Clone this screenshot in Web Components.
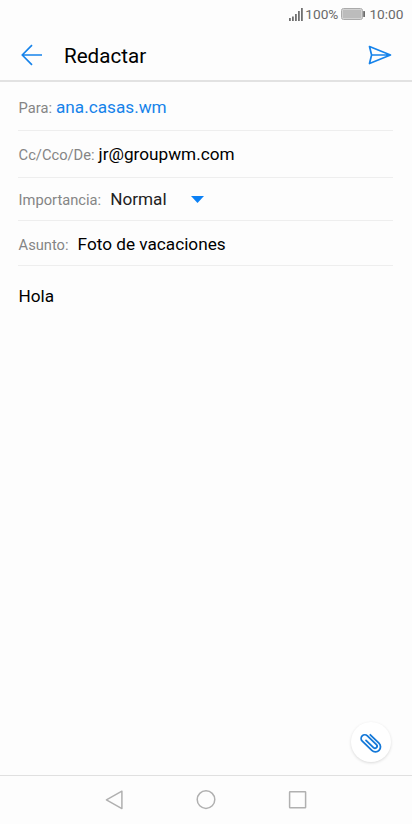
<!DOCTYPE html>
<html lang="es">
<head>
<meta charset="utf-8">
<title>Redactar</title>
<style>
html,body{margin:0;height:100%;background:#fdfdfd;overflow:hidden}
</style>
</head>
<body>
<mail-compose></mail-compose>
<script>
const define = (name, html) => {
  const t = document.createElement('template');
  t.innerHTML = html;
  customElements.define(name, class extends HTMLElement {
    constructor() {
      super();
      this.attachShadow({ mode: 'open' }).append(t.content.cloneNode(true));
    }
  });
};

define('status-bar', `
<style>
:host{display:flex;height:28px;box-sizing:border-box;padding-right:8.500px;justify-content:flex-end;align-items:center;font-size:13.7px;color:#6a6a6a;line-height:28px}
svg{display:block}
.sig{margin-right:2px}
.bat{margin:0 4px 0 3px}
</style>
<svg class="sig" width="14" height="13" viewBox="0 0 14 13" fill="#707070"><path d="M0 10h1.8v3H0zM3 8.500h1.800v4.500H3zM6 6h1.800v7H6zM9 3h1.800v10H9zM12 0h1.800v13H12z"/></svg>
<span>100%</span>
<svg class="bat" width="24" height="12" viewBox="0 0 24 12"><rect x=".5" y=".5" width="21" height="11" rx="2" fill="#e8e8e8" stroke="#aaa"/><rect x="1.500" y="1.500" width="19" height="9" fill="#bcbcbc"/><rect x="22.200" y="3" width="1.800" height="6" rx=".5" fill="#6a6a6a"/></svg>
<span>10:00</span>`);

define('title-bar', `
<style>
:host{display:flex;height:54px;box-sizing:border-box;padding:0 20px 0 21px;align-items:center;border-bottom:2px solid #e2e2e2;color:#000;font-size:20.6px}
svg{display:block;fill:none;stroke:#1683ea;stroke-width:1.7}
h1{margin:0 auto 0 22px;font:inherit;line-height:24px;padding-top:3px}
.back,.send{margin-top:2px}
</style>
<svg class="back" width="21" height="22" viewBox="0 0 21 22"><path d="M21 11H1.200M11 1.200 1.200 11l9.800 9.800" stroke-linejoin="round"/></svg>
<h1><slot></slot></h1>
<svg class="send" width="24" height="20" viewBox="0 0 24 20"><path d="M1.500 1.500 22.500 10 1.500 18.500 3.600 10ZM3.600 10H22" stroke-linejoin="round"/></svg>`);

define('form-row', `
<style>
:host{display:flex;box-sizing:border-box;margin:0 19px 0 18px;align-items:baseline;border-bottom:1px solid #eee;color:#000;font-size:17.2px;line-height:24px}
.label{color:#858585;font-size:14.7px;margin-left:.6px}
.value{margin-left:var(--gap,4px);color:var(--value,inherit)}
</style>
<span class="label"><slot name="label"></slot></span><span class="value"><slot></slot></span>`);

define('drop-arrow', `
<style>:host{display:block;margin-left:24px;align-self:flex-start}svg{display:block}</style>
<svg width="13" height="7" viewBox="0 0 13 7"><path d="M0 0h13L6.500 7z" fill="#0b80f5"/></svg>`);

define('attach-button', `
<style>
:host{position:absolute;right:21px;bottom:13px;width:40px;height:40px;border-radius:50%;background:#fff;box-shadow:0 1px 3px rgba(0,0,0,.14);display:flex;align-items:center;justify-content:center}
svg{display:block}
</style>
<svg width="24" height="24" viewBox="-12 -12 24 24" fill="none" stroke="#1478d8" stroke-width="1.800" stroke-linecap="round"><g transform="translate(0 .7) rotate(44)"><path d="M-6 -5.200H6A5.100 5.100 0 0 1 6 5H-7.300A3.700 3.700 0 0 1 -7.300 -2.400H5.200A2.100 2.100 0 0 1 5.200 1.800H-5.200"/></g></svg>`);

define('nav-bar', `
<style>
:host{display:flex;height:49px;box-sizing:border-box;border-top:1px solid #e0e0e0;align-items:center;justify-content:center;gap:72px}
svg{display:block;fill:none;stroke:#b0b0b0;stroke-width:1.5}
</style>
<svg width="20" height="20" viewBox="0 0 20 20"><path d="M17.900 1.200v17.400L2.400 9.800Z" stroke-linejoin="round"/></svg>
<svg width="20" height="20" viewBox="0 0 20 20"><circle cx="10" cy="9.600" r="8.800"/></svg>
<svg width="20" height="20" viewBox="0 0 20 20"><rect x="1.600" y="1.700" width="16" height="16" rx=".5"/></svg>`);

define('mail-compose', `
<style>
:host{display:flex;flex-direction:column;height:824px;width:412px;background:#fdfdfd;font-family:Roboto,sans-serif}
main{flex:1;position:relative}
.to{height:49px;padding-top:13px;--value:#1683ea}
.cc{height:47px;padding-top:11px}
.imp{height:43px;padding-top:9px;--gap:9px;color:#222}
.imp .v{display:flex}
drop-arrow{margin-top:9px}
.sub{height:45px;padding-top:11px;--gap:9px}
p{margin:18px 18.400px;font-size:17.2px;line-height:24px;color:#000}
</style>
<status-bar></status-bar>
<title-bar>Redactar</title-bar>
<main>
<form-row class="to"><span slot="label">Para:</span>ana.casas.wm</form-row>
<form-row class="cc"><span slot="label">Cc/Cco/De:</span>jr@groupwm.com</form-row>
<form-row class="imp"><span slot="label">Importancia:</span><div class="v">Normal<drop-arrow></drop-arrow></div></form-row>
<form-row class="sub"><span slot="label">Asunto:</span>Foto de vacaciones</form-row>
<p>Hola</p>
<attach-button></attach-button>
</main>
<nav-bar></nav-bar>`);
</script>
</body>
</html>
